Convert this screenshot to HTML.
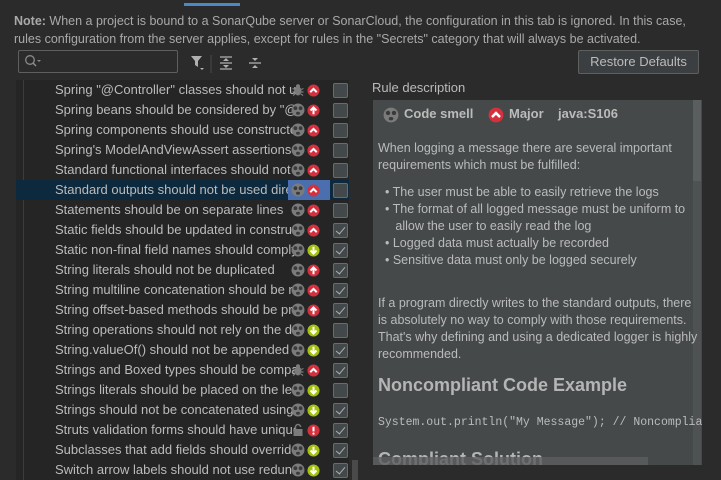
<!DOCTYPE html>
<html><head><meta charset="utf-8"><style>
body{margin:0;width:721px;height:480px;background:#2b2b2b;font-family:"Liberation Sans",sans-serif;color:#bbbbbb;overflow:hidden;position:relative}
.abs{position:absolute}
.note{left:14px;top:12px;font-size:12.5px;line-height:18px;color:#a9a9a9;white-space:nowrap}
.note b{color:#a9a9a9}
.list{left:16px;top:80px;width:333px;height:400px;background:#252526}
.row{position:absolute;left:0;width:333px;height:20px;font-size:13px;line-height:20px}
.row .t{position:absolute;left:39px;width:241px;overflow:hidden;white-space:nowrap;color:#bbbbbb}
.row.sel{background:#0d293e}
.row svg{position:absolute}
.cb{position:absolute;left:317px;top:3px;width:13px;height:13px;border:1px solid #6b6b6b;background:#43494a;border-radius:2px}
.cb.c::after{content:"";position:absolute;left:4px;top:1px;width:4px;height:8px;border:solid #aeb0b1;border-width:0 1.5px 1.5px 0;transform:rotate(40deg)}
</style></head><body>
<svg width="0" height="0" style="position:absolute">
<defs>
<symbol id="sm" viewBox="0 0 14 14"><circle cx="7" cy="7" r="6.5" fill="#7b7b7b"/><circle cx="4.4" cy="5.2" r="1.9" fill="#3a3a3a"/><circle cx="9.6" cy="5.2" r="1.9" fill="#3a3a3a"/><ellipse cx="7" cy="10.2" rx="2" ry="1.5" fill="#3a3a3a"/></symbol>
<symbol id="bug" viewBox="0 0 14 14"><ellipse cx="7" cy="8" rx="3.5" ry="4.5" fill="#7b7b7b"/><circle cx="7" cy="3.2" r="2" fill="#7b7b7b"/><path d="M1.5 5.5l2.5 1M12.5 5.5l-2.5 1M1.5 9h2M12.5 9h-2M2 12.5l2-1.5M12 12.5l-2-1.5" stroke="#7b7b7b" stroke-width="1.2"/></symbol>
<symbol id="lock" viewBox="0 0 14 14"><rect x="2.5" y="6" width="9" height="7" fill="#7b7b7b"/><path d="M4.5 6V4a2.5 2.5 0 0 1 5 0" stroke="#7b7b7b" stroke-width="1.5" fill="none"/></symbol>
<symbol id="maj" viewBox="0 0 14 14"><circle cx="7" cy="7" r="6.5" fill="#d5303e"/><path d="M3.5 8.8L7 5.3l3.5 3.5" stroke="#fff" stroke-width="2.2" fill="none"/></symbol>
<symbol id="crit" viewBox="0 0 14 14"><circle cx="7" cy="7" r="6.5" fill="#d5303e"/><path d="M7 11V4M3.8 7L7 3.7 10.2 7" stroke="#fff" stroke-width="2.2" fill="none"/></symbol>
<symbol id="min" viewBox="0 0 14 14"><circle cx="7" cy="7" r="6.5" fill="#a4c10f"/><path d="M7 3v7M3.8 7L7 10.3 10.2 7" stroke="#fff" stroke-width="2.2" fill="none"/></symbol>
<symbol id="blk" viewBox="0 0 14 14"><circle cx="7" cy="7" r="6.5" fill="#d5303e"/><path d="M7 3v5" stroke="#fff" stroke-width="2.2"/><circle cx="7" cy="10.4" r="1.2" fill="#fff"/></symbol>
</defs></svg>
<div class="abs" style="left:184px;top:3px;width:56px;height:3px;background:#4a88c7"></div>
<div class="abs note"><b>Note:</b> When a project is bound to a SonarQube server or SonarCloud, the configuration in this tab is ignored. In this case,<br>rules configuration from the server applies, except for rules in the "Secrets" category that will always be activated.</div>
<div class="abs" style="left:18px;top:50px;width:158px;height:21px;border:1px solid #5e6060;border-radius:2px;background:#2b2b2b"></div>
<svg class="abs" style="left:24px;top:54px" width="20" height="14"><circle cx="6" cy="6" r="4.3" stroke="#8a8a8a" stroke-width="1.3" fill="none"/><path d="M9 9l3 3" stroke="#8a8a8a" stroke-width="1.5"/><path d="M13 6h4l-2 2z" fill="#8a8a8a"/></svg>
<svg class="abs" style="left:189px;top:53px" width="80" height="20"><path d="M2 3h11l-4 5v6l-3-2V8z" fill="#aeb0b1"/><path d="M11 15h4l-2 2z" fill="#aeb0b1"/><path d="M22 2v18" stroke="#4a4a4a"/><path d="M31 4h12M31 16h12M31 10h12" stroke="#aeb0b1" stroke-width="1.2"/><path d="M37 5l-3 3h6zM37 15l-3-3h6z" fill="#aeb0b1"/><path d="M60 10h12" stroke="#aeb0b1" stroke-width="1.3"/><path d="M66 8l-3-3h6zM66 12l-3 3h6z" fill="#aeb0b1"/></svg>
<div class="abs" style="left:578px;top:50px;width:119px;height:22px;border:1px solid #5e6060;border-radius:2px;background:#3c3f41;font-size:13px;line-height:22px;text-align:center;color:#bbbbbb">Restore Defaults</div>
<div class="abs list">
<div class="abs" style="left:7px;top:0;width:1px;height:400px;background:#3c3c3c"></div>
<div id="rows"></div>
</div>
<div class="abs" style="left:352px;top:460px;width:6px;height:20px;background:#4a4a4a"></div>
<div class="abs" style="left:372px;top:80px;font-size:13px;color:#bbbbbb">Rule description</div>
<div class="abs" style="left:373px;top:100px;width:329px;height:365px;background:#45494a;overflow:hidden">
 <div class="abs" style="left:320px;top:0;width:8px;height:365px;background:#4f5253"></div>
 <div class="abs" style="left:320px;top:0;width:8px;height:81px;background:#5b5e5f"></div>
 <svg class="abs" style="left:10px;top:7px" width="16" height="16"><use href="#sm"/></svg>
 <div class="abs" style="left:31px;top:6px;font-size:13px;font-weight:bold;color:#bbbbbb;white-space:nowrap">Code smell</div>
 <svg class="abs" style="left:115px;top:7px" width="16" height="16"><use href="#maj"/></svg>
 <div class="abs" style="left:136px;top:6px;font-size:13px;font-weight:bold;color:#bbbbbb">Major</div>
 <div class="abs" style="left:185px;top:6px;font-size:13px;font-weight:bold;color:#bbbbbb">java:S106</div>
 <div class="abs" style="left:5px;top:40px;width:320px;font-size:12.5px;line-height:17px;color:#bbbbbb;white-space:nowrap">When logging a message there are several important<br>requirements which must be fulfilled:</div>
 <div class="abs" style="left:12px;top:84px;font-size:12.5px;line-height:17px;color:#bbbbbb;white-space:nowrap">
 • The user must be able to easily retrieve the logs<br>• The format of all logged message must be uniform to<br>&nbsp;&nbsp;&nbsp;allow the user to easily read the log<br>• Logged data must actually be recorded<br>• Sensitive data must only be logged securely</div>
 <div class="abs" style="left:5px;top:195px;font-size:12.5px;line-height:17px;color:#bbbbbb;white-space:nowrap">If a program directly writes to the standard outputs, there<br>is absolutely no way to comply with those requirements.<br>That's why defining and using a dedicated logger is highly<br>recommended.</div>
 <div class="abs" style="left:5px;top:275px;font-size:18px;font-weight:bold;color:#b5b5b5;white-space:nowrap">Noncompliant Code Example</div>
 <div class="abs" style="left:5px;top:316px;font-family:'Liberation Mono',monospace;font-size:11.5px;color:#bbbbbb;white-space:nowrap">System.out.println("My Message");  // Noncompliant</div>
 <div class="abs" style="left:5px;top:349px;font-size:18px;font-weight:bold;color:#b5b5b5;white-space:nowrap">Compliant Solution</div>
 <div class="abs" style="left:0;top:357px;width:275px;height:8px;background:#5b5e5f;opacity:.8"></div>
</div>
<script>
var R=[["Spring \"@Controller\" classes should not use","bug","maj",0],
["Spring beans should be considered by \"@ComponentScan\"","sm","crit",0],
["Spring components should use constructor injection","sm","maj",0],
["Spring's ModelAndViewAssert assertions should","sm","maj",0],
["Standard functional interfaces should not be","sm","maj",0],
["Standard outputs should not be used directly","sm","maj",0,1],
["Statements should be on separate lines","sm","maj",0],
["Static fields should be updated in constructors","sm","maj",1],
["Static non-final field names should comply","sm","min",1],
["String literals should not be duplicated","sm","crit",1],
["String multiline concatenation should be replaced","sm","maj",1],
["String offset-based methods should be preferred","sm","crit",1],
["String operations should not rely on the default","sm","min",0],
["String.valueOf() should not be appended to","sm","min",1],
["Strings and Boxed types should be compared","bug","maj",1],
["Strings literals should be placed on the left","sm","min",0],
["Strings should not be concatenated using '+'","sm","min",1],
["Struts validation forms should have unique","lock","blk",1],
["Subclasses that add fields should override","sm","min",1],
["Switch arrow labels should not use redundant","sm","min",1]];
var h="";R.forEach(function(r,i){
h+='<div class="row'+(r[4]?' sel':'')+'" style="top:'+(i*20)+'px"><span class="t">'+r[0].replace(/"/g,'&quot;')+'</span>'+
(r[4]?'<div style="position:absolute;left:272px;top:0;width:42px;height:20px;background:#4b6eaf"></div>':'')+
'<svg style="left:275px;top:3px" width="14" height="14"><use href="#'+r[1]+'"/></svg><svg style="left:291px;top:4px" width="13" height="13"><use href="#'+r[2]+'"/></svg><div class="cb'+(r[3]?' c':'')+'"></div></div>';});
document.getElementById("rows").innerHTML=h;
</script>
</body></html>
